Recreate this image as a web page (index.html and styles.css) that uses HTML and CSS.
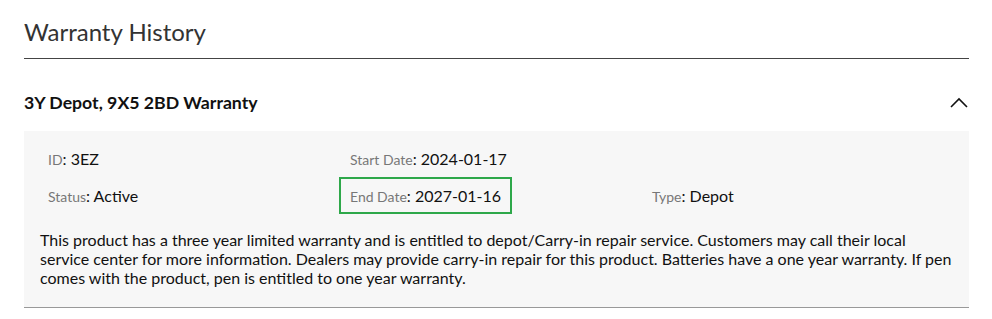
FILE: index.html
```html
<!DOCTYPE html>
<html lang="en">
<head>
  <meta charset="UTF-8" />
  <meta name="viewport" content="width=device-width, initial-scale=1.0"/>
  <title>Warranty History</title>
  <link rel="stylesheet" href="styles.css">
</head>
<body>

  <div class="page">
    <!-- Title -->
    <h1 class="page-title">Warranty History</h1>

    <!-- Warranty item -->
    <div class="warranty">
      <div class="warranty-head">
        <span class="warranty-name">3Y Depot, 9X5 2BD Warranty</span>
        <svg class="chevron" width="18" height="11" viewBox="0 0 18 11">
          <path d="M1 10 L9 2 L17 10" fill="none" stroke="#111" stroke-width="1.6"/>
        </svg>
      </div>

      <div class="warranty-body">
        <div class="fields">
          <div class="field"><span class="label">ID</span>: 3EZ</div>
          <div class="field"><span class="label">Start Date</span>: 2024-01-17</div>
          <div class="field"></div>
          <div class="field"><span class="label">Status</span>: Active</div>
          <div class="field highlight"><span class="label">End Date</span>: 2027-01-16</div>
          <div class="field"><span class="label">Type</span>: Depot</div>
        </div>
        <p class="description">This product has a three year limited warranty and is entitled to depot/Carry-in repair service. Customers may call their local service center for more information. Dealers may provide carry-in repair for this product. Batteries have a one year warranty. If pen comes with the product, pen is entitled to one year warranty.</p>
      </div>
    </div>
  </div>

</body>
</html>
```

FILE: styles.css
```css
body {
  font-family: Lato, "Open Sans", sans-serif;
  background: #fff;
  color: #111;
  margin: 0;
}
.page {
  width: 945px;
  padding: 0 23px 0 24px;
}
.page-title {
  font-size: 24px;
  font-weight: normal;
  color: #333;
  line-height: 32px;
  margin: 16px 0 0 0;
  padding-bottom: 10px;
  border-bottom: 1px solid #444;
}
.warranty-head {
  height: 72px;
  box-sizing: border-box;
  padding-top: 14px;
  display: flex;
  align-items: center;
  justify-content: space-between;
}
.warranty-name {
  font-size: 17.7px;
  font-weight: bold;
}
.chevron {
  margin-right: 1px;
}
.warranty-body {
  background: #f7f7f7;
  padding: 9px 13px 20px 13px;
  border-bottom: 1px solid #999;
}
.fields {
  display: grid;
  grid-template-columns: 302px 302px 302px;
}
.field {
  justify-self: start;
  font-size: 16px;
  line-height: 19px;
  padding: 7px 9px;
  border: 2px solid transparent;
  height: 19px;
}
.field .label {
  color: #777;
  font-size: 14px;
}
.field.highlight {
  border-color: #2ea84a;
}
.description {
  font-size: 16px;
  line-height: 19px;
  margin: 16px 0 0 3px;
}
```
